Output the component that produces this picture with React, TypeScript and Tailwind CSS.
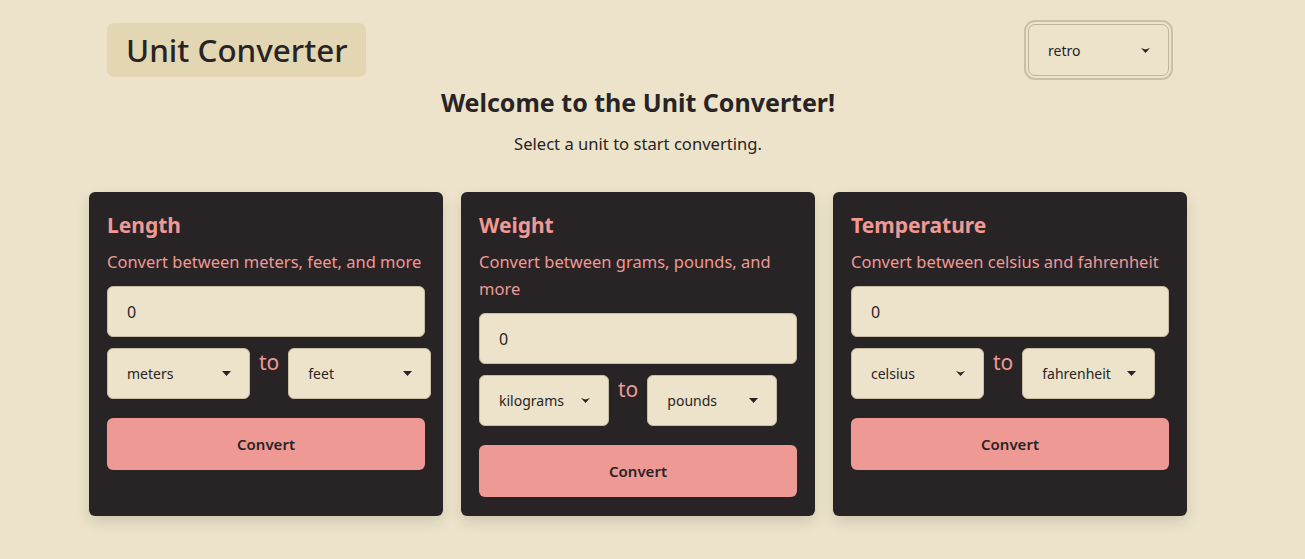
import React from "react";

const FONT = "font-['Noto_Sans','Open_Sans',sans-serif]";

function Caret({ notch }: { notch?: boolean }) {
  return (
    <svg width="9" height="5" viewBox="0 0 9 5" className="shrink-0">
      {notch ? (
        <polygon points="0,0 4.5,1.5 9,0 4.5,5" fill="#282425" />
      ) : (
        <polygon points="0,0 9,0 4.5,5" fill="#282425" />
      )}
    </svg>
  );
}

function FakeSelect({ label, width, notch }: { label: string; width: string; notch?: boolean }) {
  return (
    <div
      className={`${width} h-[51px] shrink-0 flex items-center justify-between pl-[19px] pr-[18px] rounded-[6px] border border-[#c7bca4] bg-[#ece3ca] text-[14px] text-[#282425]`}
    >
      <span>{label}</span>
      <Caret notch={notch} />
    </div>
  );
}

function Card({
  title,
  desc,
  from,
  to,
  fromW,
  toW,
  fromNotch,
  toNotch,
}: {
  title: string;
  desc: string;
  from: string;
  to: string;
  fromW: string;
  toW: string;
  fromNotch?: boolean;
  toNotch?: boolean;
}) {
  return (
    <div className="bg-[#282425] rounded-[6px] shadow-[0_6px_14px_rgba(0,0,0,0.12)] px-[18px] pt-[19px] pb-[19px] flex flex-col">
      <h2 className="text-[21px] leading-[28px] font-bold text-[#ef9995]">{title}</h2>
      <p className="mt-[9px] text-[16.5px] leading-[27px] text-[#ef9995]">{desc}</p>
      <div className="mt-[11px] h-[51px] flex items-center pl-[19px] rounded-[6px] border border-[#c7bca4] bg-[#ece3ca] text-[16px] text-[#282425]">
        0
      </div>
      <div className="mt-[11px] flex items-start">
        <FakeSelect label={from} width={fromW} notch={fromNotch} />
        <span className="mx-[9px] text-[21px] leading-[28px] text-[#ef9995]">to</span>
        <FakeSelect label={to} width={toW} notch={toNotch} />
      </div>
      <button className="mt-[19px] h-[52px] w-full rounded-[6px] bg-[#ef9995] text-[15px] font-semibold text-[#282425]">
        Convert
      </button>
    </div>
  );
}

export default function App() {
  return (
    <div className={`min-h-screen w-full bg-[#ece3ca] ${FONT} text-[#282425]`}>
      <div className="w-[1098px] ml-[89px]">
        <header className="pt-[23px] px-[18px] flex items-center justify-between">
          <div className="h-[54px] px-[19px] flex items-center rounded-[7px] bg-[#e3d7b3] text-[31.4px] font-medium">
            Unit Converter
          </div>
          <div className="w-[141px] h-[52px] flex items-center justify-between pl-[19px] pr-[18px] rounded-[7px] border border-[#bfb399] outline-2 outline-solid outline-offset-2 outline-[#cbbfa5] text-[14px]">
            <span>retro</span>
            <Caret notch />
          </div>
        </header>
        <h1 className="mt-[9px] text-center text-[25px] leading-[32px] font-bold">
          Welcome to the Unit Converter!
        </h1>
        <p className="mt-[14px] text-center text-[16.6px] leading-[24px]">Select a unit to start converting.</p>
        <div className="mt-[36px] grid grid-cols-3 gap-[18px] h-[323px]">
          <Card
            title="Length"
            desc="Convert between meters, feet, and more"
            from="meters"
            to="feet"
            fromW="w-[143px]"
            toW="w-[143px]"
          />
          <Card
            title="Weight"
            desc="Convert between grams, pounds, and more"
            from="kilograms"
            to="pounds"
            fromW="w-[130px]"
            toW="w-[130px]"
            fromNotch
          />
          <Card
            title="Temperature"
            desc="Convert between celsius and fahrenheit"
            from="celsius"
            to="fahrenheit"
            fromW="w-[133px]"
            toW="w-[133px]"
            fromNotch
          />
        </div>
      </div>
    </div>
  );
}
